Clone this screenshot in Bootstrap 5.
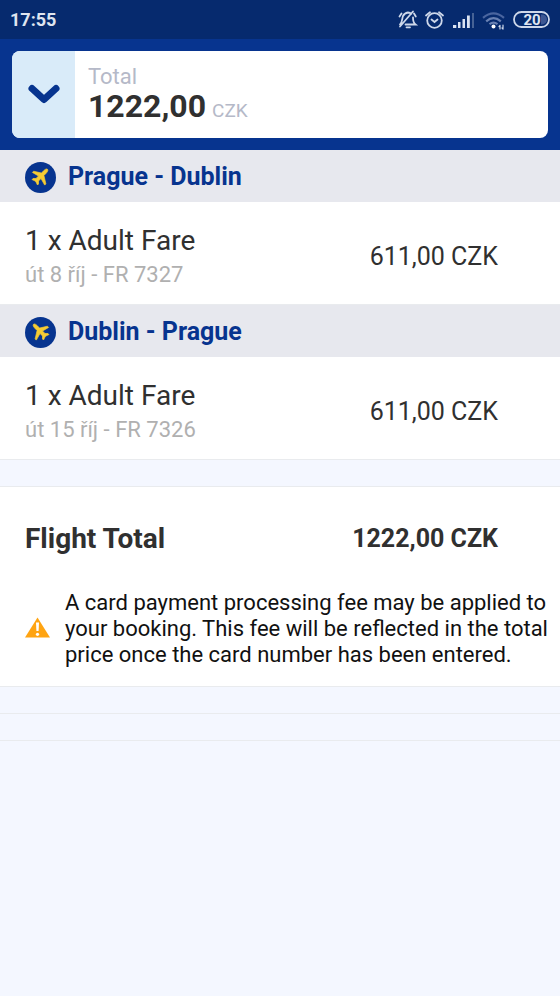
<!DOCTYPE html>
<html lang="en">
<head>
<meta charset="utf-8">
<meta name="viewport" content="width=device-width, initial-scale=1">
<title>Price breakdown</title>
<link href="https://cdn.jsdelivr.net/npm/bootstrap@5.3.0/dist/css/bootstrap.min.css" rel="stylesheet">
<style>
body { font-family: Roboto, "Noto Sans", sans-serif; background: #f4f7ff; color: #303030; }
svg { display: block; flex: none; }
.status-bar { background: #062a6e; color: #dfe5f0; padding: 0 10px; height: 39px; font-size: 18px; }
.app-header { background: #07348f; padding: 12px; }
.total-box { border-radius: 8px; height: 87px; }
.toggle-btn { width: 63px; background: #d9ebf9; border: 0; padding: 0; }
.total-info { padding: 13px; }
.total-label { font-size: 22px; line-height: 26px; color: #b5b9c8; }
.total-value { line-height: 32px; gap: 6px; }
.total-value strong { font-size: 32px; }
.total-unit { font-size: 19px; color: #b5b9c8; }
.route { background: #e7e8ee; padding: 2px 25px 0; height: 52px; gap: 12px; }
.route h2 { font-size: 25px; line-height: 32px; color: #07348f; }
.fare { padding: 21px 62px 14px 25px; border-bottom: 1px solid #e9ebee; }
.fare-name { font-size: 28px; line-height: 36px; }
.fare-info { font-size: 22px; line-height: 31px; color: #b0b0b0; }
.price { font-size: 25px; line-height: 32px; }
.sum .price { font-size: 25px; }
.strip { height: 27px; border-bottom: 1px solid #e9ebee; }
.sum { padding: 32px 62px 31px 25px; }
.sum h2 { font-size: 28px; line-height: 40px; }
.note { padding: 0 12px 18px 25px; gap: 15px; font-size: 22px; line-height: 26px; color: #111; border-bottom: 1px solid #e9ebee; }
</style>
</head>
<body>
<div class="status-bar d-flex align-items-center justify-content-between">
  <span class="fw-bold">17:55</span>
  <div class="d-flex align-items-center">
    <svg width="153" height="24" viewBox="0 0 153 24" fill="none" stroke="#ced8ea" stroke-width="1.8" stroke-linecap="round" role="img" aria-label="Muted, alarm set, signal, Wi-Fi, battery 20 percent">
      <path d="M3 16.500C5.500 14.500 5 10.500 6 8 7.300 5.300 9.500 4.800 11 4.500 12.500 4.500 13.500 5 14.300 5.800M16 9.500C16 13 16.500 15 18.500 16.500H8.500M9.500 19.300H13M2.500 8.500L4.500 5.500M17 5.500L18.800 8.500M3 18.500L16 3.500"/>
      <circle cx="37.500" cy="12.500" r="7.300"/><path d="M34.500 11.500L37.500 14L40.500 11.500M29 7.500L33 4.300M42 4.300L46 7.500"/>
      <g stroke="none" fill="#dbe3f2"><rect x="56" y="17" width="3.300" height="3"/><rect x="61" y="14" width="2.500" height="6"/><rect x="65.500" y="11" width="2.500" height="9"/><rect x="70" y="7.500" width="2.800" height="12.500"/><rect x="75" y="5" width="2" height="15" opacity=".3"/></g>
      <g stroke-width="2.200" stroke-linecap="butt"><path stroke="#4a659f" d="M86 9.800Q96.500 1 107 9.800"/><path stroke="#6880b2" d="M89.200 13.300Q96.500 7 103.800 13.300"/><path stroke="#6880b2" d="M92.500 16.200Q96.500 13 100.500 16.200"/></g>
      <circle cx="96.500" cy="18.500" r="2" fill="#fff" stroke="none"/><path d="M103 17.500V21M102 18.500L103 17.500M106 17V21M105 20L106 21" stroke-width="1.200"/>
      <rect x="117" y="4" width="35" height="15" rx="7.500"/>
      <path d="M144 6.500H145A5 5 0 0 1 145 16.500H144Z" fill="#3c5793" stroke="none"/>
      <text x="135" y="17" text-anchor="middle" font-size="15" font-weight="700" fill="#dfe5f0" stroke="none">20</text>
    </svg>
  </div>
</div>

<header class="app-header">
  <div class="total-box d-flex bg-white overflow-hidden">
    <button class="toggle-btn d-flex align-items-center justify-content-center" type="button" aria-label="Collapse price breakdown">
      <svg width="34" height="24" viewBox="0 0 34 24" fill="none" stroke="#07348f" stroke-width="7" stroke-linecap="round" stroke-linejoin="round"><path d="M5 5.500L17 16.500L29 5.500"/></svg>
    </button>
    <div class="total-info">
      <div class="total-label">Total</div>
      <div class="total-value d-flex align-items-baseline"><strong>1222,00</strong><span class="total-unit">CZK</span></div>
    </div>
  </div>
</header>

<main>
  <section class="bg-white">
    <div class="route d-flex align-items-center">
      <svg width="31" height="31" viewBox="0 0 31 31" aria-hidden="true"><circle cx="15.500" cy="15.500" r="15.500" fill="#07348f"/><path fill="#f6cc33" stroke="#f6cc33" stroke-width=".7" stroke-linejoin="round" d="M22.500 7.300C23.500 8.300 22.200 10.200 21 11.400L18.900 13.500L20.900 21.900L19.700 23.100L16 16.500L13.500 19V22L12.500 23L11 19.900L10.100 19L7 17.500L8 16.500H11L13.500 14L7.400 10.400L8.600 9.200L16.500 11.100L18.400 9C19.600 7.700 21.500 6.300 22.500 7.300Z"/></svg>
      <h2 class="fw-bold m-0">Prague - Dublin</h2>
    </div>
    <div class="fare d-flex align-items-center justify-content-between">
      <div>
        <div class="fare-name">1 x Adult Fare</div>
        <div class="fare-info">út 8 říj - FR 7327</div>
      </div>
      <div class="price">611,00 CZK</div>
    </div>
  </section>
  <section class="bg-white">
    <div class="route d-flex align-items-center">
      <svg width="31" height="31" viewBox="0 0 31 31" aria-hidden="true"><circle cx="15.500" cy="15.500" r="15.500" fill="#07348f"/><path transform="matrix(-1 0 0 1 31 0)" fill="#f6cc33" stroke="#f6cc33" stroke-width=".7" stroke-linejoin="round" d="M22.500 7.300C23.500 8.300 22.200 10.200 21 11.400L18.900 13.500L20.900 21.900L19.700 23.100L16 16.500L13.500 19V22L12.500 23L11 19.900L10.100 19L7 17.500L8 16.500H11L13.500 14L7.400 10.400L8.600 9.200L16.500 11.100L18.400 9C19.600 7.700 21.500 6.300 22.500 7.300Z"/></svg>
      <h2 class="fw-bold m-0">Dublin - Prague</h2>
    </div>
    <div class="fare d-flex align-items-center justify-content-between">
      <div>
        <div class="fare-name">1 x Adult Fare</div>
        <div class="fare-info">út 15 říj - FR 7326</div>
      </div>
      <div class="price">611,00 CZK</div>
    </div>
  </section>
  <div class="strip"></div>
  <section class="bg-white">
    <div class="sum d-flex align-items-center justify-content-between">
      <h2 class="fw-bold m-0">Flight Total</h2>
      <div class="price fw-bold">1222,00 CZK</div>
    </div>
    <div class="note d-flex align-items-center">
      <svg width="25" height="24" viewBox="0 0 25 24" role="img" aria-label="Warning"><path d="M12.500 0.500L25 20.500H0Z" fill="#ffa412"/><path d="M11 5.500H14L13.600 14H11.400Z" fill="#fff"/><circle cx="12.500" cy="17.300" r="1.600" fill="#fff"/></svg>
      <p class="m-0">A card payment processing fee may be applied to your booking. This fee will be reflected in the total price once the card number has been entered.</p>
    </div>
  </section>
  <div class="strip"></div>
  <div class="strip"></div>
</main>
<script src="https://cdn.jsdelivr.net/npm/bootstrap@5.3.0/dist/js/bootstrap.bundle.min.js"></script>
</body>
</html>
